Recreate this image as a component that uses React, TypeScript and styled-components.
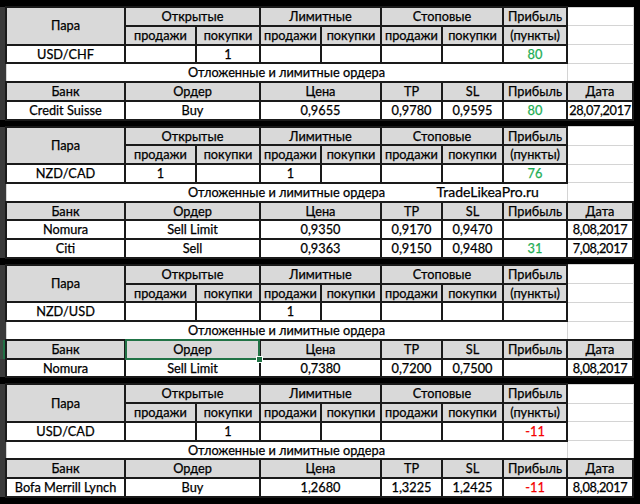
import React from "react";
import styled, { createGlobalStyle, css } from "styled-components";

const Global = createGlobalStyle`
  html, body { margin: 0; padding: 0; background: #000; }
  body { font-family: Lato, "Open Sans", sans-serif; }
`;

const Page = styled.div`
  width: 640px;
  height: 504px;
  overflow: hidden;
  background: #000;
  display: flex;
  flex-direction: column;
  gap: 5px;
  padding-top: 6px;
  box-sizing: border-box;
`;

const Sheet = styled.table`
  border-collapse: collapse;
  table-layout: fixed;
  width: 634px;
  font-size: 12.75px;
  color: #000;
  -webkit-text-stroke: 0.25px currentColor;
`;

const Row = styled.tr`
  height: 18.75px;
`;

const RowHead = styled.td<{ $active?: boolean }>`
  padding: 0;
  border: none;
  background: #3a3a3a;
  ${(p) =>
    p.$active &&
    css`
      background: #3f4a42;
      box-shadow: inset -2px 0 0 #217346;
    `}
`;

type Kind = "head" | "data" | "blank";
type Tone = "green" | "red";

const Cell = styled.td<{ $kind: Kind; $tone?: Tone; $selected?: boolean }>`
  padding: 0;
  text-align: center;
  vertical-align: middle;
  white-space: nowrap;
  overflow: visible;
  line-height: 1;
  ${(p) =>
    p.$kind === "blank"
      ? css`
          background: #fff;
          border: 1px solid #d4d4d4;
        `
      : css`
          border: 2px solid #1a1a1a;
          background: ${p.$kind === "head" ? "#d9d9d9" : "#fff"};
        `}
  color: ${(p) => (p.$tone === "green" ? "#1fae55" : p.$tone === "red" ? "#f40000" : "#000")};
  ${(p) =>
    p.$selected &&
    css`
      position: relative;
      &::after {
        content: "";
        position: absolute;
        inset: -2px -1px -2px -1px;
        border: 2px solid #217346;
      }
      &::before {
        content: "";
        position: absolute;
        right: -4px;
        bottom: -5px;
        width: 5px;
        height: 5px;
        background: #217346;
        border: 1px solid #fff;
        z-index: 2;
      }
    `}
`;

const DateCell = styled(Cell)`
  letter-spacing: -0.35px;
`;

const Span = styled(Cell)`
  position: relative;
`;

const Watermark = styled.span`
  position: absolute;
  left: 430px;
  top: 50%;
  transform: translateY(-50%);
  font-size: 14px;
  color: #000;
`;

const COLS = [6, 119, 71, 64, 61, 60, 61, 61, 64, 66];

type BankRow = {
  bank: string;
  order: string;
  price: string;
  tp: string;
  sl: string;
  profit: string;
  date: string;
};

type Block = {
  pair: string;
  open: [string, string];
  limit: [string, string];
  stop: [string, string];
  profit: string;
  banks: BankRow[];
  watermark?: string;
  selectOrder?: boolean;
};

const toneOf = (v: string): Tone | undefined =>
  v === "" ? undefined : v.startsWith("-") ? "red" : "green";

const blocks: Block[] = [
  {
    pair: "USD/CHF",
    open: ["", "1"],
    limit: ["", ""],
    stop: ["", ""],
    profit: "80",
    banks: [
      { bank: "Credit Suisse", order: "Buy", price: "0,9655", tp: "0,9780", sl: "0,9595", profit: "80", date: "28,07,2017" },
    ],
  },
  {
    pair: "NZD/CAD",
    open: ["1", ""],
    limit: ["1", ""],
    stop: ["", ""],
    profit: "76",
    watermark: "TradeLikeaPro.ru",
    banks: [
      { bank: "Nomura", order: "Sell Limit", price: "0,9350", tp: "0,9170", sl: "0,9470", profit: "", date: "8,08,2017" },
      { bank: "Citi", order: "Sell", price: "0,9363", tp: "0,9150", sl: "0,9480", profit: "31", date: "7,08,2017" },
    ],
  },
  {
    pair: "NZD/USD",
    open: ["", ""],
    limit: ["1", ""],
    stop: ["", ""],
    profit: "",
    selectOrder: true,
    banks: [
      { bank: "Nomura", order: "Sell Limit", price: "0,7380", tp: "0,7200", sl: "0,7500", profit: "", date: "8,08,2017" },
    ],
  },
  {
    pair: "USD/CAD",
    open: ["", "1"],
    limit: ["", ""],
    stop: ["", ""],
    profit: "-11",
    banks: [
      { bank: "Bofa Merrill Lynch", order: "Buy", price: "1,2680", tp: "1,3225", sl: "1,2425", profit: "-11", date: "8,08,2017" },
    ],
  },
];

function PairBlock({ b }: { b: Block }) {
  return (
    <Sheet>
      <colgroup>
        {COLS.map((w, i) => (
          <col key={i} style={{ width: w }} />
        ))}
      </colgroup>
      <tbody>
        <Row>
          <RowHead />
          <Cell $kind="head" rowSpan={2}>Пара</Cell>
          <Cell $kind="head" colSpan={2}>Открытые</Cell>
          <Cell $kind="head" colSpan={2}>Лимитные</Cell>
          <Cell $kind="head" colSpan={2}>Стоповые</Cell>
          <Cell $kind="head">Прибыль</Cell>
          <Cell $kind="blank" />
        </Row>
        <Row>
          <RowHead />
          <Cell $kind="head">продажи</Cell>
          <Cell $kind="head">покупки</Cell>
          <Cell $kind="head">продажи</Cell>
          <Cell $kind="head">покупки</Cell>
          <Cell $kind="head">продажи</Cell>
          <Cell $kind="head">покупки</Cell>
          <Cell $kind="head">(пункты)</Cell>
          <Cell $kind="blank" />
        </Row>
        <Row>
          <RowHead />
          <Cell $kind="data">{b.pair}</Cell>
          <Cell $kind="data">{b.open[0]}</Cell>
          <Cell $kind="data">{b.open[1]}</Cell>
          <Cell $kind="data">{b.limit[0]}</Cell>
          <Cell $kind="data">{b.limit[1]}</Cell>
          <Cell $kind="data">{b.stop[0]}</Cell>
          <Cell $kind="data">{b.stop[1]}</Cell>
          <Cell $kind="data" $tone={toneOf(b.profit)}>{b.profit}</Cell>
          <Cell $kind="blank" />
        </Row>
        <Row>
          <RowHead />
          <Span $kind="blank" colSpan={8}>
            Отложенные и лимитные ордера
            {b.watermark && <Watermark>{b.watermark}</Watermark>}
          </Span>
          <Cell $kind="blank" />
        </Row>
        <Row>
          <RowHead $active={b.selectOrder} />
          <Cell $kind="head">Банк</Cell>
          <Cell $kind="head" colSpan={2} $selected={b.selectOrder}>Ордер</Cell>
          <Cell $kind="head" colSpan={2}>Цена</Cell>
          <Cell $kind="head">TP</Cell>
          <Cell $kind="head">SL</Cell>
          <Cell $kind="head">Прибыль</Cell>
          <Cell $kind="head">Дата</Cell>
        </Row>
        {b.banks.map((r, i) => (
          <Row key={i}>
            <RowHead />
            <Cell $kind="data">{r.bank}</Cell>
            <Cell $kind="data" colSpan={2}>{r.order}</Cell>
            <Cell $kind="data" colSpan={2}>{r.price}</Cell>
            <Cell $kind="data">{r.tp}</Cell>
            <Cell $kind="data">{r.sl}</Cell>
            <Cell $kind="data" $tone={toneOf(r.profit)}>{r.profit}</Cell>
            <DateCell $kind="data">{r.date}</DateCell>
          </Row>
        ))}
      </tbody>
    </Sheet>
  );
}

export default function App() {
  return (
    <>
      <Global />
      <Page>
        {blocks.map((b, i) => (
          <PairBlock key={i} b={b} />
        ))}
      </Page>
    </>
  );
}
